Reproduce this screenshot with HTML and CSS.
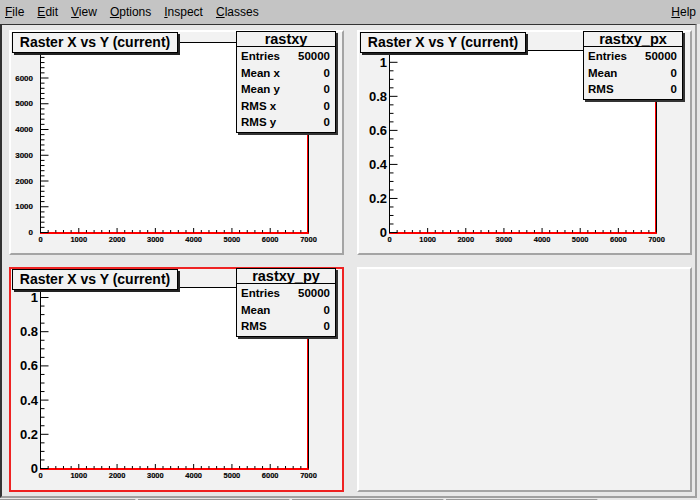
FILE: index.html
```html
<!DOCTYPE html>
<html lang="en">
<head>
  <meta charset="UTF-8">
  <title>Raster X vs Y</title>
  <link rel="stylesheet" href="styles.css">
</head>
<body>
  <div class="menubar">
    <span class="menu"><u>F</u>ile</span>
    <span class="menu"><u>E</u>dit</span>
    <span class="menu"><u>V</u>iew</span>
    <span class="menu"><u>O</u>ptions</span>
    <span class="menu"><u>I</u>nspect</span>
    <span class="menu"><u>C</u>lasses</span>
    <span class="menu help"><u>H</u>elp</span>
  </div>

  <div class="canvas">
    <div class="pad">
      <svg id="pad1" class="plot" viewBox="2 2 331 221"></svg>
      <div class="title-box">Raster X vs Y (current)</div>
      <div class="stats stats-2d">
        <div class="stats-title">rastxy</div>
        <div class="stats-row"><span>Entries</span><span>50000</span></div>
        <div class="stats-row"><span>Mean x</span><span>0</span></div>
        <div class="stats-row"><span>Mean y</span><span>0</span></div>
        <div class="stats-row"><span>RMS x</span><span>0</span></div>
        <div class="stats-row"><span>RMS y</span><span>0</span></div>
      </div>
    </div>

    <div class="pad">
      <svg id="pad2" class="plot" viewBox="2 2 331 221"></svg>
      <div class="title-box">Raster X vs Y (current)</div>
      <div class="stats stats-1d">
        <div class="stats-title">rastxy_px</div>
        <div class="stats-row"><span>Entries</span><span>50000</span></div>
        <div class="stats-row"><span>Mean</span><span>0</span></div>
        <div class="stats-row"><span>RMS</span><span>0</span></div>
      </div>
    </div>

    <div class="pad selected">
      <svg id="pad3" class="plot" viewBox="2 2 331 221"></svg>
      <div class="title-box">Raster X vs Y (current)</div>
      <div class="stats stats-2d">
        <div class="stats-title">rastxy_py</div>
        <div class="stats-row"><span>Entries</span><span>50000</span></div>
        <div class="stats-row"><span>Mean</span><span>0</span></div>
        <div class="stats-row"><span>RMS</span><span>0</span></div>
      </div>
    </div>

    <div class="pad"></div>
  </div>

  <div class="statusbar">
    <div class="cell first"></div>
    <div class="cell"></div>
    <div class="cell"></div>
    <div class="cell"></div>
  </div>

  <script>
    const NS = "http://www.w3.org/2000/svg";

    function add(parent, tag, attrs, text) {
      const e = document.createElementNS(NS, tag);
      for (const k in attrs) e.setAttribute(k, attrs[k]);
      if (text !== undefined) e.textContent = text;
      parent.appendChild(e);
      return e;
    }

    function fmt(v) {
      if (v === 0) return "0";
      if (v === 1) return "1";
      return v.toFixed(1);
    }

    // frame coords are pad-local (outer border corner = 0,0)
    const pads = [
      { id: "pad1", x0: 31, x1: 299, y0: 12, y1: 202,
        step: 5.15, minors: 36, per: 5, big: 8, small: 4, gap: 7, cls: "ylab",
        label: k => k <= 6 ? String(k * 1000) : null },
      { id: "pad2", x0: 32, x1: 299, y0: 20, y1: 202,
        step: 8.51, minors: 21, per: 4, big: 8, small: 4, gap: 2, cls: "ylab big",
        label: k => fmt(k / 5) },
      { id: "pad3", x0: 31, x1: 299, y0: 20, y1: 201,
        step: 8.55, minors: 21, per: 4, big: 8, small: 4, gap: 2, cls: "ylab big",
        label: k => fmt(k / 5) }
    ];

    function drawPad(p) {
      const svg = document.getElementById(p.id);
      const w = p.x1 - p.x0;
      add(svg, "rect", { x: p.x0 + 0.5, y: p.y0 + 0.5, width: w, height: p.y1 - p.y0, class: "frame" });
      add(svg, "path", { d: "M" + (p.x1 - 0.5) + " " + p.y0 + "V" + p.y1, class: "hist" });
      add(svg, "path", { d: "M" + p.x0 + " " + (p.y1 + 1) + "H" + (p.x1 + 1), class: "hist thick" });

      let d = "";
      // x axis, 0..7000
      for (let i = 0; i <= 35; i++) {
        const x = p.x0 + 0.5 + i * 200 * w / 7000;
        const major = i % 5 === 0;
        d += "M" + x + " " + (p.y1 + 0.5) + "V" + (p.y1 - (major ? 4 : 2));
        if (major) add(svg, "text", { x: x, y: p.y1 + 7.5, class: "xlab" }, String(i * 200));
      }
      // y axis
      for (let i = 0; i <= p.minors; i++) {
        const y = p.y1 + 0.5 - i * p.step;
        const major = i % p.per === 0;
        d += "M" + p.x0 + " " + y + "H" + (p.x0 + 0.5 + (major ? p.big : p.small));
        const text = major ? p.label(i / p.per) : null;
        if (text) add(svg, "text", { x: p.x0 - p.gap, y: y, class: p.cls }, text);
      }
      add(svg, "path", { d: d, class: "ticks" });
    }

    pads.forEach(drawPad);
  </script>
</body>
</html>
```

FILE: styles.css
```css
html, body {
  margin: 0;
  width: 700px;
  height: 500px;
  overflow: hidden;
  background: #e8e8e8;
  font-family: "Liberation Sans", Arial, sans-serif;
}
.menubar {
  display: flex;
  align-items: center;
  gap: 13px;
  height: 24px;
  padding: 0 4px 0 5px;
  background: #c4c4c4;
  font-size: 12px;
  color: #000;
}
.menu u {
  text-decoration-thickness: 1px;
}
.help {
  margin-left: auto;
}
.canvas {
  display: grid;
  grid-template-columns: 335px 335px;
  grid-template-rows: 225px 225px;
  column-gap: 13px;
  row-gap: 12px;
  width: fit-content;
  padding: 5px 3px 4px 7px;
  border-top: 1px solid #333;
  border-left: 2px solid #333;
  border-right: 2px solid #a0a0a0;
  border-bottom: 2px solid #a0a0a0;
  background: #e8e8e8;
}
.pad {
  position: relative;
  box-sizing: border-box;
  background: #f2f2f2;
  border: 2px solid;
  border-color: #fff #a4a4a4 #a4a4a4 #fff;
}
.pad.selected {
  border-color: #ee2222;
}
.plot {
  display: block;
  width: 331px;
  height: 221px;
}
.frame {
  fill: #fff;
  stroke: #000;
  stroke-width: 1;
}
.hist {
  fill: none;
  stroke: #f00;
  stroke-width: 1;
}
.hist.thick {
  stroke-width: 2;
}
.ticks {
  fill: none;
  stroke: #000;
  stroke-width: 1;
}
.xlab {
  font: bold 7.5px "Liberation Sans", Arial, sans-serif;
  text-anchor: middle;
  dominant-baseline: central;
  stroke: #000;
  stroke-width: 0.15;
}
.ylab {
  font: bold 8px "Liberation Sans", Arial, sans-serif;
  text-anchor: end;
  dominant-baseline: central;
  stroke: #000;
  stroke-width: 0.15;
}
.ylab.big {
  font-size: 13px;
  stroke: none;
}
.title-box {
  position: absolute;
  left: 1px;
  top: 0;
  width: 166px;
  height: 21px;
  box-sizing: border-box;
  border: 1px solid #000;
  box-shadow: 2px 2px 0 #222;
  background: #f2f2f2;
  font-weight: bold;
  font-size: 14px;
  line-height: 19px;
  text-align: center;
}
.stats {
  position: absolute;
  top: -1px;
  width: 100px;
  box-sizing: border-box;
  border: 1px solid #000;
  box-shadow: 2px 2px 0 #333;
  background: #f2f2f2;
  font-weight: bold;
  font-size: 11.5px;
  padding-bottom: 1px;
}
.stats-2d {
  left: 225px;
}
.stats-1d {
  left: 224px;
}
.stats-title {
  font-size: 14.5px;
  line-height: 14px;
  text-align: center;
  border-bottom: 1px solid #000;
  margin-bottom: 1px;
}
.stats-row {
  display: flex;
  justify-content: space-between;
  line-height: 16.6px;
  padding: 0 5px 0 4px;
}
.statusbar {
  display: flex;
  gap: 2px;
  height: 22px;
  margin-top: 1px;
}
.cell {
  width: 150px;
  border: 1px solid;
  border-color: #999 #fff #fff #999;
}
.cell.first {
  width: 134px;
}
```
